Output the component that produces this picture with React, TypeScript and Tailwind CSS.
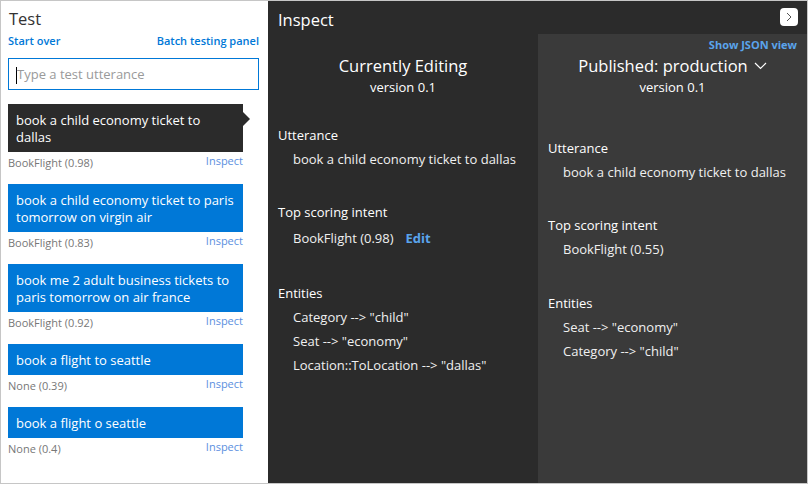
import React from "react"

const utterances = [
  { text: "book a child economy ticket to dallas", intent: "BookFlight (0.98)", active: true },
  { text: "book a child economy ticket to paris tomorrow on virgin air", intent: "BookFlight (0.83)" },
  { text: "book me 2 adult business tickets to paris tomorrow on air france", intent: "BookFlight (0.92)" },
  { text: "book a flight to seattle", intent: "None (0.39)" },
  { text: "book a flight o seattle", intent: "None (0.4)" },
]

const Label = ({ children, className = "" }: { children: React.ReactNode; className?: string }) => (
  <div className={"text-[13px] leading-6 text-white " + className}>{children}</div>
)

const Value = ({ children }: { children: React.ReactNode }) => (
  <div className="pl-[15px] text-[13px] leading-6 text-[#f0f0f0]">{children}</div>
)

export default function App() {
  return (
    <div className="w-[808px] h-[484px] flex border border-[#c6c6c6] overflow-hidden font-['Open_Sans',sans-serif]">
      {/* test panel */}
      <div className="w-[267px] shrink-0 bg-white pl-[7px] pr-[9px] flex flex-col">
        <div className="pt-[6px] pl-[1px] text-[16.5px] leading-6 text-[#333]">Test</div>
        <div className="mt-[2px] flex justify-between text-[11px] font-semibold leading-4 text-[#0078d7]">
          <a href="#">Start over</a>
          <a href="#">Batch testing panel</a>
        </div>
        <div className="mt-[9px] h-[32px] border border-[#0078d7] flex items-center px-[7px] pt-[2px] text-[13px] text-[#9a9a9a]">
          <span className="w-px h-[17px] bg-black" />
          Type a test utterance
        </div>
        <ul className="mt-[14px] w-[235px]">
          {utterances.map((u, i) => (
            <li key={i}>
              <div
                className={
                  "relative px-2 pt-[8px] pb-[6px] text-[13px] leading-[17px] text-white " +
                  (u.active ? "bg-[#2b2b2b]" : "bg-[#0078d7]")
                }
              >
                {u.text}
                {u.active && (
                  <span className="absolute left-full top-[8px] w-0 h-0 border-y-[7px] border-y-transparent border-l-[7px] border-l-[#2b2b2b]" />
                )}
              </div>
              <div className="h-4 mb-4 flex justify-between items-start text-[11px] leading-4">
                <span className="pt-[3px] text-[#777]">{u.intent}</span>
                <a href="#" className="pt-px text-[#5b8fe0]">Inspect</a>
              </div>
            </li>
          ))}
        </ul>
      </div>

      {/* inspect panel */}
      <div className="flex-1 bg-[#2b2b2b] flex flex-col">
        <div className="h-[33px] shrink-0 flex justify-between pl-[10px] pr-[9px]">
          <div className="pt-[7px] text-[16.5px] leading-6 text-white">Inspect</div>
          <button className="mt-[7px] w-[18px] h-[18px] rounded-sm bg-white flex items-center justify-center">
            <svg width="8" height="10" viewBox="0 0 8 10" fill="none">
              <path d="M2 1l4 4-4 4" stroke="#555" strokeWidth="1" />
            </svg>
          </button>
        </div>
        <div className="flex flex-1">
          <div className="w-[270px] shrink-0 px-[10px]">
            <div className="pt-[20px] text-center">
              <div className="text-[16.5px] leading-6 text-white">Currently Editing</div>
              <div className="text-[13px] leading-[18px] text-white">version 0.1</div>
            </div>
            <Label className="mt-[27px]">Utterance</Label>
            <Value>book a child economy ticket to dallas</Value>
            <Label className="mt-[29px]">Top scoring intent</Label>
            <div className="pl-[15px] text-[13px] leading-6 text-[#f0f0f0] mt-[2px]">
              BookFlight (0.98)
              <a href="#" className="ml-[12px] font-bold text-[#5aa4ec]">Edit</a>
            </div>
            <Label className="mt-[31px]">Entities</Label>
            <Value>Category --&gt; "child"</Value>
            <Value>Seat --&gt; "economy"</Value>
            <Value>Location::ToLocation --&gt; "dallas"</Value>
          </div>
          <div className="flex-1 bg-[#3a3a3a] px-[10px]">
            <div className="pt-[3px] text-right text-[11px] font-bold leading-4 text-[#5aa4ec]">Show JSON view</div>
            <div className="pt-px text-center">
              <div className="inline-flex items-center gap-[6px] text-[16.5px] leading-6 text-white">
                Published: production
                <svg width="13" height="8" viewBox="0 0 13 8" fill="none">
                  <path d="M1 1l5.5 5.5L12 1" stroke="#fff" strokeWidth="1.2" />
                </svg>
              </div>
              <div className="text-[13px] leading-[18px] text-white">version 0.1</div>
            </div>
            <Label className="mt-[40px]">Utterance</Label>
            <Value>book a child economy ticket to dallas</Value>
            <Label className="mt-[29px]">Top scoring intent</Label>
            <Value>BookFlight (0.55)</Value>
            <Label className="mt-[30px]">Entities</Label>
            <Value>Seat --&gt; "economy"</Value>
            <Value>Category --&gt; "child"</Value>
          </div>
        </div>
      </div>
    </div>
  )
}
